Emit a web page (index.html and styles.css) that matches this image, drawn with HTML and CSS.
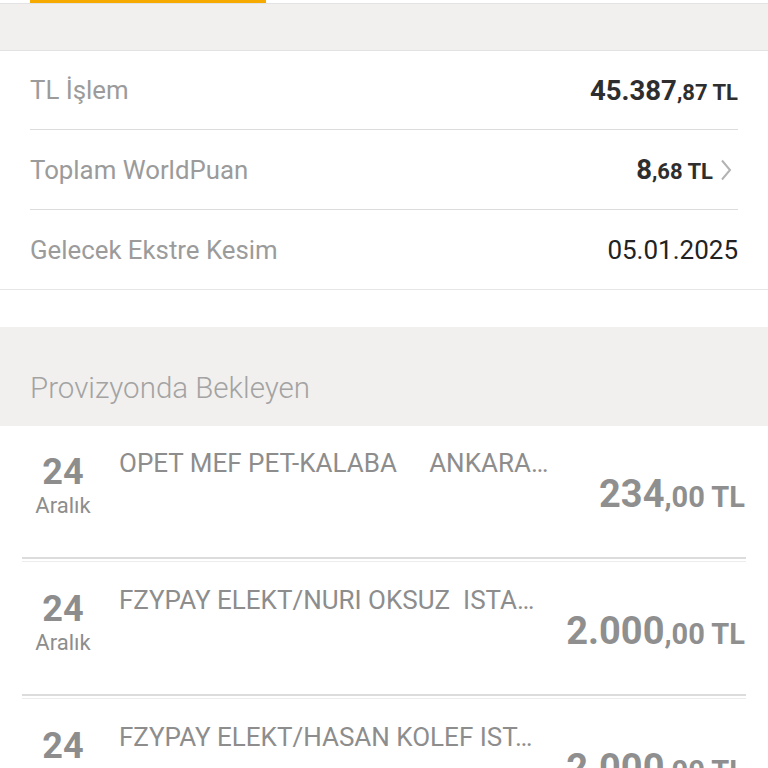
FILE: index.html
```html
<!DOCTYPE html>
<html lang="tr">
<head>
	<meta charset="UTF-8">
	<title>Kart Detay</title>
	<link rel="stylesheet" href="styles.css">
</head>
<body>
<div class="tabs">
    <div class="tab-active"></div>
</div>
<div class="gray-band"></div>

<div class="summary">
    <div class="sum-row">
        <span class="label">TL İşlem</span>
        <span class="value"><b>45.387</b><small>,87 TL</small></span>
    </div>
    <div class="sum-row">
        <span class="label">Toplam WorldPuan</span>
        <span class="value">
            <b>8</b><small>,68 TL</small>
            <svg class="chev" width="12" height="22" viewBox="0 0 12 22"><path d="M2 1.5 L10 11 L2 20.5" fill="none" stroke="#b3b3b3" stroke-width="2"/></svg>
        </span>
    </div>
    <div class="sum-row">
        <span class="label">Gelecek Ekstre Kesim</span>
        <span class="date">05.01.2025</span>
    </div>
</div>

<div class="section-title">Provizyonda Bekleyen</div>

<ul class="tx-list">
    <li class="tx">
        <div class="tx-date">
            <b>24</b>
            <span>Aralık</span>
        </div>
        <div class="tx-name">OPET MEF PET-KALABA     ANKARA…</div>
        <div class="tx-amount"><b>234</b><small>,00 TL</small></div>
    </li>
    <li class="tx">
        <div class="tx-date">
            <b>24</b>
            <span>Aralık</span>
        </div>
        <div class="tx-name">FZYPAY ELEKT/NURI OKSUZ  ISTA…</div>
        <div class="tx-amount"><b>2.000</b><small>,00 TL</small></div>
    </li>
    <li class="tx">
        <div class="tx-date">
            <b>24</b>
            <span>Aralık</span>
        </div>
        <div class="tx-name">FZYPAY ELEKT/HASAN KOLEF IST…</div>
        <div class="tx-amount"><b>2.000</b><small>,00 TL</small></div>
    </li>
</ul>
</body>
</html>
```

FILE: styles.css
```css
body,div,ul,li,p{
    margin: 0;
    padding: 0;
}
body{
    font-family: Roboto, "Liberation Sans", sans-serif;
    background: #fff;
    color: #333;
}
ul{
    list-style: none;
}
b{
    font-weight: 700;
}

/* ust sekme */
.tabs{
    height: 3px;
    border-bottom: 1px solid #e3e3e3;
}
.tab-active{
    width: 236px;
    height: 3px;
    margin-left: 30px;
    background: #f6aa00;
}
.gray-band{
    height: 46px;
    background: #f1f0ee;
    border-bottom: 1px solid #e2e2e2;
}

/* ozet */
.summary{
    padding: 0 30px;
    border-bottom: 1px solid #e6e6e6;
    margin-bottom: 37px;
}
.sum-row{
    display: flex;
    align-items: center;
    justify-content: space-between;
    height: 79px;
    border-bottom: 1px solid #dcdcdc;
}
.sum-row:first-child{
    height: 78px;
}
.sum-row:last-child{
    border-bottom: none;
}
.label{
    font-size: 25.8px;
    color: #9b9b9b;
}
.value{
    display: flex;
    align-items: baseline;
    color: #2e2e2e;
}
.value b{
    font-size: 27.5px;
}
.value small{
    font-size: 22px;
    font-weight: 700;
}
.chev{
    align-self: center;
    margin: 0 6px 0 7px;
}
.date{
    font-size: 26px;
    color: #222;
}

/* provizyon */
.section-title{
    height: 99px;
    box-sizing: border-box;
    padding: 43px 30px 0;
    line-height: 36px;
    background: #f1f0ee;
    font-size: 29.5px;
    font-weight: 300;
    color: #a3a3a3;
}
.tx-list{
    padding: 0 22px;
}
.tx{
    display: flex;
    align-items: flex-start;
    height: 133px;
    box-sizing: border-box;
    padding: 22px 1px 0 0;
    border-bottom: 2px solid #dcdcdc;
    box-shadow: 0 2px 0 #fff, 0 3px 0 #ececec;
    margin-bottom: 4px;
    color: #8d8d8d;
}
.tx-date{
    width: 82px;
    flex-shrink: 0;
    padding-top: 4px;
    display: flex;
    flex-direction: column;
    align-items: center;
}
.tx-date b{
    font-size: 36px;
    line-height: 40px;
}
.tx-date span{
    font-size: 22px;
    line-height: 28px;
}
.tx-name{
    flex: 1;
    margin-left: 15px;
    font-size: 26px;
    line-height: 30px;
    white-space: pre;
    overflow: hidden;
}
.tx-amount{
    margin-top: 26px;
    line-height: 40px;
    white-space: nowrap;
    color: #8f8f8f;
}
.tx-amount b{
    font-size: 38px;
}
.tx-amount small{
    font-size: 29px;
    font-weight: 700;
}
```
